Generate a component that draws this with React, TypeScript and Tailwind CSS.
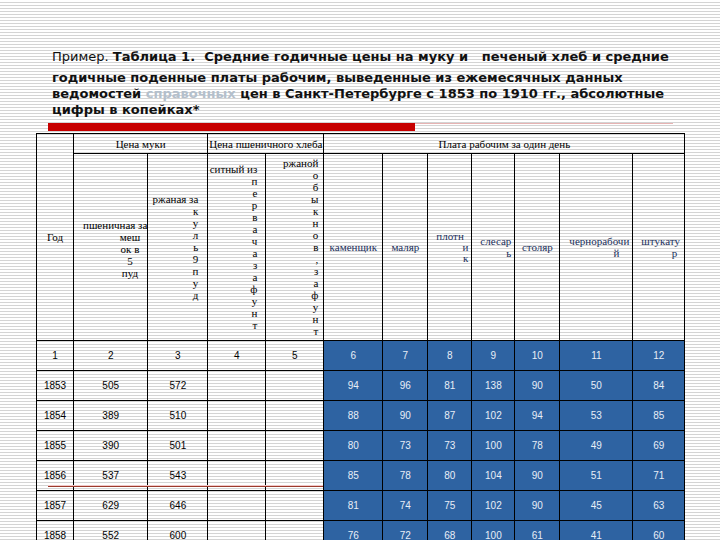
const ROWS: (string | number)[][] = [
  [1853, 505, 572, '', '', 94, 96, 81, 138, 90, 50, 84],
  [1854, 389, 510, '', '', 88, 90, 87, 102, 94, 53, 85],
  [1855, 390, 501, '', '', 80, 73, 73, 100, 78, 49, 69],
  [1856, 537, 543, '', '', 85, 78, 80, 104, 90, 51, 71],
  [1857, 629, 646, '', '', 81, 74, 75, 102, 90, 45, 63],
  [1858, 552, 600, '', '', 76, 72, 68, 100, 61, 41, 60],
]

const WIDTHS = [37, 74, 60, 58, 58, 59, 45, 44, 43, 45, 73, 52]

function Letters({ first, rest, className }: { first: string; rest: string; className: string }) {
  return (
    <div className={className}>
      <div className="whitespace-nowrap">{first}</div>
      {rest.split('').map((ch, i) => (
        <div key={i}>{ch}</div>
      ))}
    </div>
  )
}

function DataRow({ cells }: { cells: (string | number)[] }) {
  return (
    <tr className="h-[30px]">
      {cells.map((c, i) =>
        i < 5 ? (
          <td key={i} className="border border-black text-center align-middle font-[family-name:'Liberation_Sans',Arial,sans-serif] text-[10px] text-black">
            {c}
          </td>
        ) : (
          <td key={i} className="border border-black bg-[#2e63a2] text-center align-middle font-[family-name:'Liberation_Sans',Arial,sans-serif] text-[10px] text-[#e8eef7]">
            {c}
          </td>
        )
      )}
    </tr>
  )
}

export default function App() {
  return (
    <div className="relative h-[540px] w-[720px] overflow-hidden bg-white bg-[linear-gradient(to_bottom,#ffffff_66%,#d4d4d4_66%)] bg-[length:100%_3px] pt-[47px] font-[family-name:'Liberation_Sans',Arial,sans-serif]">
      {/* Title */}
      <div className="pl-[52px] font-[family-name:'DejaVu_Sans',Verdana,sans-serif] text-[13px] text-[#111]">
        <div className="whitespace-pre leading-[20px]">
          <span className="font-normal">Пример. </span>
          <span className="font-bold">Таблица 1.  Средние годичные цены на муку и   печеный хлеб и средние</span>
        </div>
        <div className="mt-[3px] whitespace-pre font-bold leading-[16px]">
          <div>годичные поденные платы рабочим, выведенные из ежемесячных данных</div>
          <div>
            ведомостей <span className="text-[#b4c0cc]">справочных</span> цен в Санкт-Петербурге с 1853 по 1910 гг., абсолютные
          </div>
          <div>цифры в копейках*</div>
        </div>
      </div>

      {/* Red rule */}
      <div className="mt-[5px] flex items-start pl-[48px]">
        <div className="h-[8px] w-[367px] bg-[#c70000]" />
        <div className="h-[1px] w-[258px] bg-[#e7b3b3]" />
      </div>

      {/* Table */}
      <table className="ml-[36px] mt-[2px] table-fixed border-collapse font-[family-name:'Liberation_Serif','DejaVu_Serif',serif] text-[11px] leading-[12px]">
        <colgroup>
          {WIDTHS.map((w, i) => (
            <col key={i} style={{ width: w }} />
          ))}
        </colgroup>
        <tbody>
          <tr className="h-[20px]">
            <td rowSpan={2} className="border border-black text-center align-middle">
              Год
            </td>
            <td colSpan={2} className="border border-black text-center align-middle">
              Цена муки
            </td>
            <td colSpan={2} className="border border-black text-center align-middle">
              Цена пшеничного хлеба
            </td>
            <td colSpan={7} className="border border-black text-center align-middle">
              Плата рабочим за один день
            </td>
          </tr>
          <tr className="h-[187px]">
            <td className="border border-black pl-[9px] align-middle">
              <div className="pt-[4px]">
                <div className="whitespace-nowrap">пшеничная за</div>
                <div className="ml-[34px] w-[26px] text-center">меш</div>
                <div className="ml-[34px] w-[26px] whitespace-nowrap text-center">ок в</div>
                <div className="ml-[34px] w-[26px] text-center">5</div>
                <div className="ml-[34px] w-[26px] text-center">пуд</div>
              </div>
            </td>
            <td className="border border-black pr-[9px] align-middle">
              <Letters first="ржаная за" rest="куль9пуд" className="text-right" />
            </td>
            <td className="border border-black pr-[8px] align-middle">
              <Letters first="ситный из" rest="первачазафунт" className="text-right" />
            </td>
            <td className="border border-black pr-[5px] align-middle">
              <Letters first="ржаной" rest="обыкнов,зафунт" className="text-right" />
            </td>
            <td className="border border-black text-center align-middle text-[#1b2f5c]">каменщик</td>
            <td className="border border-black text-center align-middle text-[#1b2f5c]">маляр</td>
            <td className="border border-black align-middle text-[#1b2f5c] leading-[11px]">
              <div className="pl-[8px]">плотн</div>
              <div className="pr-[3px] text-right">и</div>
              <div className="pr-[3px] text-right">к</div>
            </td>
            <td className="border border-black align-middle text-[#1b2f5c]">
              <div className="pl-[8px]">слесар</div>
              <div className="pr-[3px] text-right">ь</div>
            </td>
            <td className="border border-black text-center align-middle text-[#1b2f5c]">столяр</td>
            <td className="border border-black align-middle text-[#1b2f5c]">
              <div className="whitespace-nowrap pl-[9px]">чернорабочи</div>
              <div className="pr-[13px] text-right">й</div>
            </td>
            <td className="border border-black align-middle text-[#1b2f5c]">
              <div className="whitespace-nowrap pl-[8px]">штукату</div>
              <div className="pr-[7px] text-right">р</div>
            </td>
          </tr>
          <DataRow cells={[1, 2, 3, 4, 5, 6, 7, 8, 9, 10, 11, 12]} />
          {ROWS.map((r) => (
            <DataRow key={r[0]} cells={r} />
          ))}
        </tbody>
      </table>

      {/* stray rule across the 1856 row */}
      <div className="absolute left-[48px] top-[485px] h-[1px] w-[275px] bg-[#f0c8c8]" />
      <div className="absolute left-[48px] top-[486px] h-[1px] w-[275px] bg-[#9c3a2c]" />
    </div>
  )
}
